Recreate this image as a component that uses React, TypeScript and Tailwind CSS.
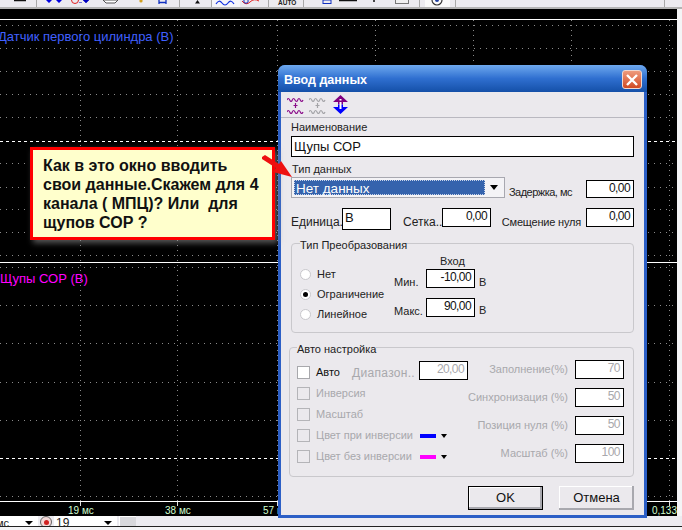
const waves = 'M0 3 Q1.3 0 2.7 3 T5.3 3 T8 3 T10.7 3 T13.3 3 T16 3';

function WaveIcon({ color }: { color: string }) {
  return (
    <svg width="17" height="18" viewBox="0 0 17 18" fill="none" stroke={color} strokeWidth="1.2">
      <path d={waves} transform="translate(0 1)" />
      <path d="M8.5 7v5M6.5 9.5h4" />
      <path d={waves} transform="translate(0 13)" />
    </svg>
  );
}

function SortIcon() {
  return (
    <svg width="15" height="19" viewBox="0 0 15 19">
      <path d="M7.5 0 15 7H10V9.5H5V7H0Z" fill="#800080" />
      <path d="M7.5 19 15 12H10V9.5H5V12H0Z" fill="#0000ff" />
      <path d="M6.5 4h2v1.500h-2zM6.500 7h2v7h-2z" fill="#fff" />
    </svg>
  );
}

function TopToolbarIcons() {
  return (
    <svg width="682" height="7" viewBox="0 0 682 7" fill="none" className="block">
      <path d="M14 0.500h12" stroke="#111" strokeWidth="1.500" />
      <path d="M36.500 0v7M179.500 0v7M211.500 0v7M268.500 0v7M303.500 0v7M419.500 0v7M455.500 0v7M664.500 0v7" stroke="#a8a8a8" />
      <path d="M46 0h6l-3 3zM56 0h6l-3 3z" fill="#0000e0" />
      <circle cx="75" cy="0" r="3.500" stroke="#e02020" />
      <path d="M79 2.500h3M83 0h6l-3 3z" stroke="#0000c0" fill="#0000c0" strokeWidth="0.500" />
      <path d="M103 0l3 3h9l3-3z" fill="#fff" stroke="#555" />
      <circle cx="141" cy="1" r="1.600" fill="#d0a020" />
      <path d="M159 0v4M166 0v4M159 2.500h7" stroke="#1030c0" strokeWidth="1.300" />
      <path d="M195 3.500h5l-2.500-3.500z" fill="#111" />
      <rect x="212" y="0" width="28" height="7" fill="#f6f6fa" />
      <path d="M216 4 Q219 -1 222 3 T228 3 T234 4" stroke="#1030e0" strokeWidth="1.200" />
      <path d="M242 1Q246 6 250 2T259 1" stroke="#e02020" />
      <circle cx="246" cy="1" r="2.200" stroke="#1030c0" />
      <rect x="323" y="0" width="8" height="3.500" stroke="#1030c0" />
      <path d="M339 0.500h18" stroke="#111" strokeWidth="1.500" />
      <circle cx="374" cy="1" r="1" fill="#111" />
      <rect x="395.500" y="-3" width="13" height="6.500" fill="#f0f0f0" stroke="#777" />
      <rect x="425" y="0" width="25" height="7" fill="#fafafa" />
      <circle cx="437" cy="0" r="5" stroke="#333" strokeWidth="1.200" />
      <circle cx="437" cy="0" r="2" fill="#2040a0" />
      <text x="278" y="5" fontSize="6.500" fontWeight="700" fill="#222">AUTO</text>
    </svg>
  );
}

function PlotGrid() {
  const dotted = [25, 48, 71, 94, 117, 163, 187, 209, 232, 255, 267, 305, 343, 382, 420, 496];
  const vertical = [80, 177, 277, 375, 473, 571, 669];
  return (
    <svg width="677" height="507" viewBox="0 0 677 507" className="block">
      {dotted.map((y) => (
        <path key={y} d={`M0 ${y - 8.500}H677`} stroke="#8a8a8a" strokeDasharray="1 5" />
      ))}
      {vertical.map((x) => (
        <path key={x} d={`M${x + 0.500} 11V497`} stroke="#8a8a8a" strokeDasharray="1 4" />
      ))}
      {vertical.map((x) => (
        <path key={`t${x}`} d={`M${x + 0.500} 493V497`} stroke="#ddd" />
      ))}
      <path d="M0 132.500H677M0 449.500H677" stroke="#fff" strokeDasharray="3 3" />
      <path d="M0 10.500H677M0 253.500H677M0 492.500H677" stroke="#fff" />
    </svg>
  );
}

function Field({ value, className, muted }: { value: string; className: string; muted?: boolean }) {
  return (
    <div
      className={`shrink-0 bg-white border border-black flex items-start justify-end pr-[3px] text-[12px] tracking-[-0.6px] leading-[15px] ${muted ? 'text-[#a8a8ac]' : 'text-[#111]'} ${className}`}
    >
      {value}
    </div>
  );
}

function Radio({ label, checked }: { label: string; checked?: boolean }) {
  return (
    <div className="flex items-center gap-[6px] h-[20px]">
      <span className="w-[11px] h-[11px] rounded-full bg-white border border-[#c8c8cc] flex items-center justify-center">
        {checked && <span className="w-[5px] h-[5px] rounded-full bg-black" />}
      </span>
      <span>{label}</span>
    </div>
  );
}

function Check({ label, active, children }: { label: string; active?: boolean; children?: React.ReactNode }) {
  return (
    <div className={`flex items-center h-[21px] ${active ? 'text-[#111]' : 'text-[#a8a8ac]'}`}>
      <span className={`shrink-0 w-[13px] h-[13px] border mr-[6px] ${active ? 'bg-white border-[#a8a8ac]' : 'border-[#b4b4b8]'}`} />
      <span>{label}</span>
      {children}
    </div>
  );
}

function ColorPick({ className }: { className: string }) {
  return (
    <div className="flex items-center ml-auto mr-[21px]">
      <span className={`w-[16px] h-[4px] ${className}`} />
      <span className="ml-[5px] border-x-[3px] border-x-transparent border-t-[4px] border-t-black" />
    </div>
  );
}

function Dialog() {
  return (
    <div className="absolute left-[278px] top-[65px] w-[369px] h-[453px] rounded-t-[7px] bg-[#2c5fc6] flex flex-col whitespace-nowrap">
      <div className="h-[27px] shrink-0 rounded-t-[7px] bg-gradient-to-b from-[#6ea9ee] via-[#2f6fd0] to-[#1450a8] flex items-center justify-between pl-[6px] pr-[5px] pt-[2px]">
        <span className="font-bold text-[12.5px] text-white mt-[2px]">Ввод данных</span>
        <div className="w-[20px] h-[19px] rounded-[3px] border border-[#f0d8d0] bg-gradient-to-b from-[#ee9a7c] to-[#d0481f] flex items-center justify-center">
          <svg width="12" height="12" viewBox="0 0 12 12" stroke="#fff" strokeWidth="2.400">
            <path d="M1 1l10 10M11 1 1 11" />
          </svg>
        </div>
      </div>

      <div className="flex-1 mx-[3px] mb-[3px] bg-[#ebe9ed] flex flex-col text-[11px] text-[#222]">
        <div className="h-[26px] shrink-0 border-b border-[#b9b8c0] flex items-center pl-[6px]">
          <WaveIcon color="#8b0f8b" />
          <span className="ml-[5px]"><WaveIcon color="#a4a4a8" /></span>
          <span className="ml-[7px]"><SortIcon /></span>
        </div>

        <div className="px-[10px] flex-1 flex flex-col">
          <div className="h-[18px] leading-[18px]">Наименование</div>
          <div className="h-[21px] bg-white border border-black pl-[2px] text-[13px] leading-[19px] text-[#111]">Щупы СОР</div>
          <div className="h-[20px] pt-[5px] pl-[1px] leading-[15px]">Тип данных</div>

          <div className="flex items-end h-[21px]">
            <div className="w-[214px] h-[21px] border border-[#a8a8b0] bg-[#f4f3f6] flex p-[2px]">
              <div className="flex-1 bg-[#3563ad] border border-dotted border-[#c8d4ea] text-white text-[13.5px] leading-[15px] pl-[1px]">Нет данных</div>
              <div className="w-[17px] flex items-center justify-center">
                <span className="border-x-[4px] border-x-transparent border-t-[5px] border-t-black" />
              </div>
            </div>
            <span className="ml-auto mr-[14px] leading-[15px] -mb-[2px] tracking-[-0.5px]">Задержка, мс</span>
            <Field value="0,00" className="w-[48px] h-[18px]" />
          </div>

          <div className="flex items-start mt-[10px] h-[22px]">
            <span className="mt-[7px] w-[51px] leading-[15px] text-[12px]">Единица..</span>
            <div className="w-[49px] h-[22px] bg-white border border-black pl-[2px] text-[13px] leading-[17px] text-[#111]">В</div>
            <span className="mt-[7px] ml-[12px] w-[39px] leading-[15px] text-[12px]">Сетка..</span>
            <Field value="0,00" className="w-[49px] h-[19px]" />
            <span className="mt-[7px] ml-auto mr-[5px] leading-[15px] tracking-[-0.2px]">Смещение нуля</span>
            <Field value="0,00" className="w-[48px] h-[19px]" />
          </div>

          <div className="relative mt-[13px] h-[90px] border border-[#c9c8cc] rounded-[4px] flex">
            <span className="absolute left-[8px] -top-[6px] bg-[#ebe9ed] leading-[14px]">Тип Преобразования</span>
            <div className="ml-[8px] mt-[20px] w-[94px]">
              <Radio label="Нет" />
              <Radio label="Ограничение" checked />
              <Radio label="Линейное" />
            </div>
            <div className="mt-[10px] flex flex-col">
              <div className="h-[15px] pl-[46px] leading-[15px]">Вход</div>
              <div className="flex items-start h-[19px]">
                <span className="w-[32px] mt-[6px] leading-[14px]">Мин.</span>
                <Field value="-10,00" className="w-[49px] h-[19px]" />
                <span className="ml-[4px] mt-[6px] leading-[14px]">В</span>
              </div>
              <div className="flex items-start h-[19px] mt-[10px]">
                <span className="w-[32px] mt-[6px] leading-[14px]">Макс.</span>
                <Field value="90,00" className="w-[49px] h-[19px]" />
                <span className="ml-[4px] mt-[5px] leading-[14px]">В</span>
              </div>
            </div>
          </div>

          <div className="relative mt-[14px] -ml-[2px] h-[130px] border border-[#c9c8cc] rounded-[4px] flex pl-[7px] pr-[12px] text-[#a8a8ac]">
            <span className="absolute left-[7px] -top-[6px] bg-[#ebe9ed] leading-[14px] text-[#222]">Авто настройка</span>
            <div className="w-[171px] mt-[14px] shrink-0">
              <Check label="Авто" active>
                <span className="ml-auto mr-[4px] text-[12px] tracking-[0.3px] text-[#a8a8ac]">Диапазон..</span>
                <Field value="20,00" muted className="w-[49px] h-[19px] -mt-[5px]" />
              </Check>
              <Check label="Инверсия" />
              <Check label="Масштаб" />
              <Check label="Цвет при инверсии"><ColorPick className="bg-[#0000ff]" /></Check>
              <Check label="Цвет без инверсии"><ColorPick className="bg-[#ff00ff]" /></Check>
            </div>
            <div className="ml-auto mt-[12px] h-fit grid grid-cols-[auto_49px] gap-y-[9px] gap-x-[7px] justify-items-end items-center">
              <span>Заполнение(%)</span>
              <Field value="70" muted className="w-[49px] h-[19px]" />
              <span>Синхронизация (%)</span>
              <Field value="50" muted className="w-[49px] h-[19px]" />
              <span>Позиция нуля (%)</span>
              <Field value="50" muted className="w-[49px] h-[19px]" />
              <span>Масштаб (%)</span>
              <Field value="100" muted className="w-[49px] h-[19px]" />
            </div>
          </div>

          <div className="flex justify-end gap-[16px] mt-[9px] text-[13px] text-[#111]">
            <button className="w-[75px] h-[24px] bg-[#ebe9ed] border border-black shadow-[inset_-2px_-2px_0_#a8a8ae,inset_1px_1px_0_#fff]">OK</button>
            <button className="w-[75px] h-[24px] bg-[#ebe9ed] shadow-[inset_-2px_-2px_0_#a8a8ae,inset_1px_1px_0_#fff]">Отмена</button>
          </div>
        </div>
      </div>
    </div>
  );
}

export default function App() {
  return (
    <div className="relative w-[682px] h-[530px] overflow-hidden bg-[#f4f4f6] font-['Liberation_Sans',sans-serif] flex flex-col">
      <div className="h-[9px] shrink-0 bg-[#ecebf0] border-b-2 border-b-[#b4b4b4] overflow-hidden">
        <TopToolbarIcons />
      </div>

      <div className="relative w-[677px] h-[507px] shrink-0 bg-black">
        <PlotGrid />
        <span className="absolute -left-[2px] top-[20px] text-[13px] leading-[16px] whitespace-nowrap text-[#4060ff]">Датчик первого цилиндра (В)</span>
        <span className="absolute left-0 top-[262px] text-[13px] leading-[16px] text-[#ff00ff]">Щупы СОР (В)</span>
        <span className="absolute left-[68px] top-[496px] text-[10px] leading-[12px] text-[#d0ffd0]">19 мс</span>
        <span className="absolute left-[165px] top-[496px] text-[10px] leading-[12px] text-[#d0ffd0]">38 мс</span>
        <span className="absolute left-[263px] top-[496px] text-[10px] leading-[12px] text-[#d0ffd0]">57 мс</span>
        <span className="absolute right-0 top-[496px] text-[10px] leading-[12px] text-[#d0ffd0]">0,133</span>
      </div>

      <div className="h-[11px] shrink-0 border-b border-b-[#222] bg-[#ecebf0] overflow-hidden flex items-start">
        <div className="w-[38px] h-[10px] bg-white relative overflow-hidden text-[11px] leading-[14px] text-[#222]">
          <span className="absolute -left-[4px] top-0">мс</span>
          <span className="absolute left-[25px] top-[5px] border-x-[4px] border-x-transparent border-t-[4px] border-t-black" />
        </div>
        <div className="w-[16px] h-[10px] flex justify-center">
          <span className="w-[12px] h-[12px] rounded-full border border-[#666] bg-[#f4d8d8] flex items-center justify-center">
            <span className="w-[5px] h-[5px] rounded-full bg-[#d02020]" />
          </span>
        </div>
        <div className="w-[63px] h-[10px] bg-white relative overflow-hidden text-[12px] leading-[14px] text-[#222] pl-[2px]">
          19
          <span className="absolute left-[50px] top-[5px] border-x-[4px] border-x-transparent border-t-[4px] border-t-black" />
        </div>
        <div className="ml-[2px] w-[17px] h-[10px] bg-[#d8d8dc] border-l border-t border-white" />
      </div>

      <Dialog />

      <div className="absolute left-[30px] top-[147px] w-[245px] h-[93px] bg-[#ffffcc] border-[3px] border-[#ff0000] shadow-[3px_3px_6px_rgba(150,150,150,0.6)] pl-[10px] pt-[6px] text-[16px] leading-[19px] font-bold text-[#111] whitespace-pre">
        {'Как в это окно вводить\nсвои данные.Скажем для 4\nканала ( МПЦ)? Или  для\nщупов СОР ?'}
      </div>

      <svg width="34" height="26" viewBox="0 0 34 26" className="absolute left-[260px] top-[154px]">
        <path d="M2 3 5 1 19 10 21 7 32 23 13 18 16 14 2 5Z" fill="#ee1010" />
      </svg>
    </div>
  );
}
